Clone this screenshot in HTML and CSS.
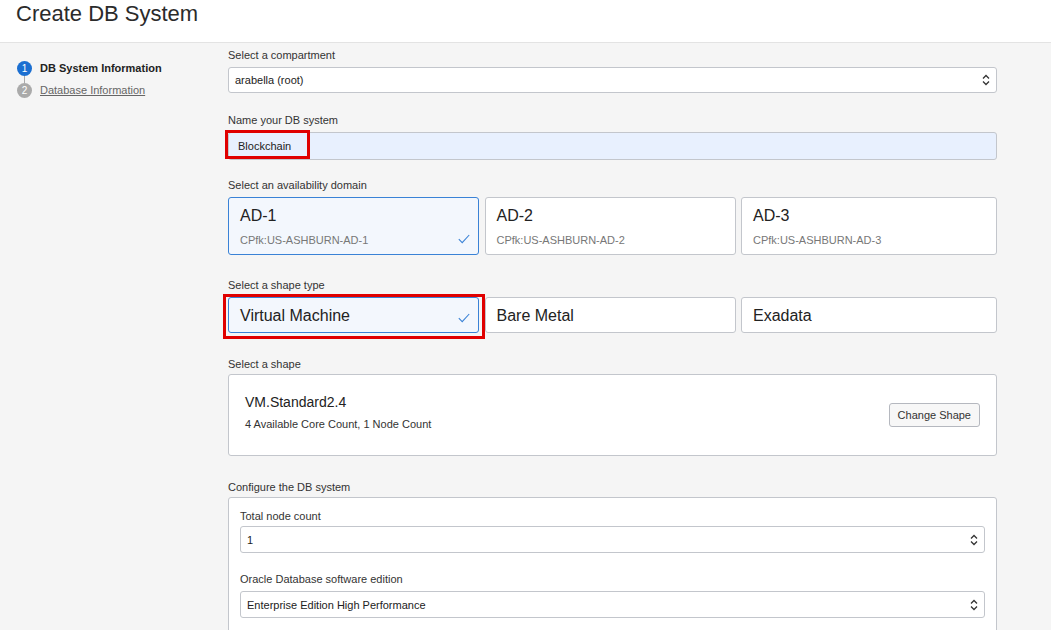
FILE: index.html
```html
<!DOCTYPE html>
<html>
<head>
<meta charset="utf-8">
<link rel="stylesheet" href="styles.css">
</head>
<body>
<header class="page-header">
  <h1 class="title">Create DB System</h1>
</header>
<div class="layout">
  <nav class="steps">
    <div class="step step-active">
      <span class="step-num">1</span>
      <span class="step-label">DB System Information</span>
    </div>
    <div class="step-line"></div>
    <div class="step">
      <span class="step-num">2</span>
      <a class="step-link">Database Information</a>
    </div>
  </nav>
  <main class="form">
    <div class="field f-compartment">
      <div class="label">Select a compartment</div>
      <div class="select">
        <span>arabella (root)</span>
        <svg class="chev" width="8" height="12" viewBox="0 0 8 12"><path d="M1 4.5 L4 1.5 L7 4.5 M1 7.5 L4 10.5 L7 7.5" fill="none" stroke="#333" stroke-width="1.3"/></svg>
      </div>
    </div>
    <div class="field f-name">
      <div class="label">Name your DB system</div>
      <div class="input-wrap">
        <div class="input">Blockchain</div>
        <div class="highlight hl-name"></div>
      </div>
    </div>
    <div class="field f-ad">
      <div class="label">Select an availability domain</div>
      <div class="cards">
        <div class="card card-tall selected">
          <div class="card-title">AD-1</div>
          <div class="card-sub">CPfk:US-ASHBURN-AD-1</div>
          <svg class="check" width="12" height="10" viewBox="0 0 12 10"><path d="M0.8 5.2 L4.2 8.6 L11.2 1" fill="none" stroke="#3a82d6" stroke-width="1.1"/></svg>
        </div>
        <div class="card card-tall">
          <div class="card-title">AD-2</div>
          <div class="card-sub">CPfk:US-ASHBURN-AD-2</div>
        </div>
        <div class="card card-tall">
          <div class="card-title">AD-3</div>
          <div class="card-sub">CPfk:US-ASHBURN-AD-3</div>
        </div>
      </div>
    </div>
    <div class="field f-type">
      <div class="label">Select a shape type</div>
      <div class="cards">
        <div class="card card-short selected">
          <div class="card-title">Virtual Machine</div>
          <svg class="check check-short" width="12" height="10" viewBox="0 0 12 10"><path d="M0.8 5.2 L4.2 8.6 L11.2 1" fill="none" stroke="#3a82d6" stroke-width="1.1"/></svg>
          <div class="highlight hl-type"></div>
        </div>
        <div class="card card-short">
          <div class="card-title">Bare Metal</div>
        </div>
        <div class="card card-short">
          <div class="card-title">Exadata</div>
        </div>
      </div>
    </div>
    <div class="field f-shape">
      <div class="label">Select a shape</div>
      <div class="shape-box">
        <div class="shape-info">
          <div class="shape-name">VM.Standard2.4</div>
          <div class="shape-desc">4 Available Core Count, 1 Node Count</div>
        </div>
        <button class="btn">Change Shape</button>
      </div>
    </div>
    <div class="field f-config">
      <div class="label">Configure the DB system</div>
      <div class="config-box">
        <div class="sub-field">
          <div class="label">Total node count</div>
          <div class="select">
            <span>1</span>
            <svg class="chev" width="8" height="12" viewBox="0 0 8 12"><path d="M1 4.5 L4 1.5 L7 4.5 M1 7.5 L4 10.5 L7 7.5" fill="none" stroke="#333" stroke-width="1.3"/></svg>
          </div>
        </div>
        <div class="sub-field sub-edition">
          <div class="label">Oracle Database software edition</div>
          <div class="select">
            <span>Enterprise Edition High Performance</span>
            <svg class="chev" width="8" height="12" viewBox="0 0 8 12"><path d="M1 4.5 L4 1.5 L7 4.5 M1 7.5 L4 10.5 L7 7.5" fill="none" stroke="#333" stroke-width="1.3"/></svg>
          </div>
        </div>
      </div>
    </div>
  </main>
</div>
</body>
</html>
```
FILE: styles.css
```css
* { box-sizing: border-box; }
html, body { margin: 0; padding: 0; }
body {
  font-family: "Liberation Sans", Arial, sans-serif;
  color: #333;
  background: #f5f5f5;
  height: 630px;
  overflow: hidden;
}
.page-header {
  background: #fff;
  height: 43px;
  border-bottom: 1px solid #e3e3e3;
  padding-left: 16px;
}
.title {
  margin: 0;
  font-weight: normal;
  font-size: 22px;
  line-height: 27px;
  color: #2b2b2b;
}
.layout {
  display: flex;
}
.steps {
  width: 228px;
  flex: none;
  padding: 18px 0 0 17px;
}
.step {
  display: flex;
  align-items: center;
  height: 14px;
  gap: 8px;
  font-size: 11px;
}
.step-num {
  width: 15px;
  height: 15px;
  border-radius: 50%;
  background: #aaa;
  color: #fff;
  font-size: 10px;
  display: flex;
  align-items: center;
  justify-content: center;
  flex: none;
}
.step-active .step-num { background: #1b6fd1; }
.step-label { font-weight: bold; color: #222; }
.step-line {
  width: 1px;
  height: 8px;
  background: #aaa;
  margin-left: 7px;
}
.step-link {
  color: #666;
  text-decoration: underline;
}
.form {
  width: 769px;
  flex: none;
  padding-top: 5px;
}
.label {
  font-size: 11px;
  line-height: 14px;
  height: 14px;
  color: #333;
  margin-bottom: 5px;
}
.field { margin-bottom: 20px; }
.f-name { margin-bottom: 18px; }
.f-ad { margin-bottom: 23px; }
.f-type { margin-bottom: 24px; }
.f-shape { margin-bottom: 24px; }
.f-shape > .label { margin-bottom: 3px; }
.f-config > .label { margin-bottom: 3px; }
.select {
  height: 26px;
  background: #fff;
  border: 1px solid #c3c6cc;
  border-radius: 3px;
  display: flex;
  align-items: center;
  justify-content: space-between;
  padding: 0 6px 0 6px;
  font-size: 11px;
  color: #222;
}
.input-wrap { position: relative; }
.input {
  height: 28px;
  background: #e8f0fe;
  border: 1px solid #c3c6cc;
  border-radius: 3px;
  display: flex;
  align-items: center;
  padding-left: 9px;
  font-size: 11px;
  color: #222;
}
.highlight {
  position: absolute;
  border: 3px solid #e00000;
  pointer-events: none;
}
.hl-name { left: -3px; top: -2px; width: 85px; height: 29px; }
.hl-type { left: -6px; top: -4px; width: 262px; height: 45px; }
.cards {
  display: grid;
  grid-template-columns: 251px 251px 256px;
  gap: 6px;
  column-gap: 5.5px;
}
.card {
  position: relative;
  background: #fff;
  border: 1px solid #c3c6cc;
  border-radius: 3px;
  padding-left: 11px;
}
.card.selected {
  background: #f3f7fd;
  border-color: #3a82d6;
}
.card-tall { height: 58px; padding-top: 8px; }
.card-short { height: 36px; display: flex; align-items: center; padding-top: 2px; }
.card-title {
  font-size: 16px;
  line-height: 20px;
  color: #222;
}
.card-sub {
  font-size: 11px;
  color: #777;
  margin-top: 8px;
}
.check { position: absolute; right: 8px; bottom: 10px; }
.check-short { bottom: 9px; }
.shape-box {
  height: 82px;
  background: #fff;
  border: 1px solid #c3c6cc;
  border-radius: 3px;
  display: flex;
  align-items: center;
  justify-content: space-between;
  padding: 0 16px 0 16px;
}
.shape-info { padding-bottom: 7px; }
.shape-name { font-size: 14px; line-height: 18px; color: #222; }
.shape-desc { font-size: 11px; color: #333; margin-top: 7px; }
.btn {
  font-family: "Liberation Sans", Arial, sans-serif;
  font-size: 11px;
  color: #333;
  background: #f7f7f7;
  border: 1px solid #b5b8bf;
  border-radius: 3px;
  height: 24px;
  padding: 0 8px;
  margin-bottom: 1px;
}
.config-box {
  background: #fff;
  border: 1px solid #c3c6cc;
  border-radius: 3px;
  padding: 11px 11px 0 11px;
  height: 200px;
}
.sub-field { margin-bottom: 19px; }
.sub-field .label { margin-bottom: 3px; }
.sub-edition .label { margin-bottom: 5px; }
.sub-field .select { height: 27px; }
```
